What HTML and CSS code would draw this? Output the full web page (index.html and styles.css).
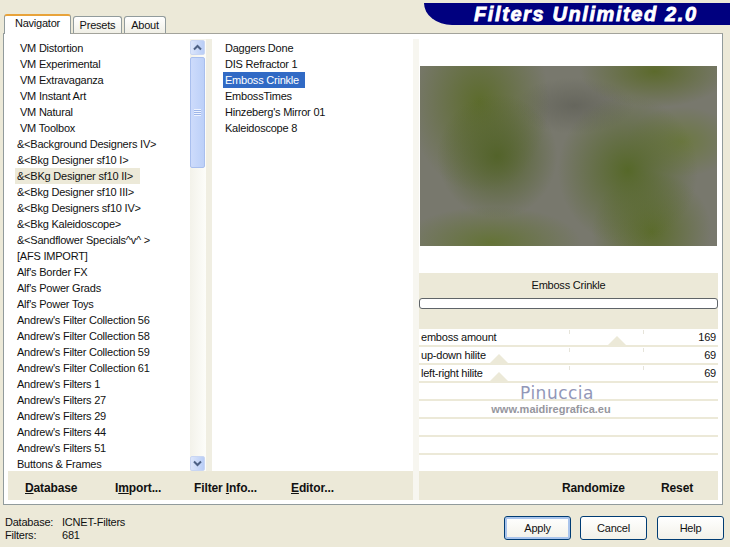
FILE: index.html
```html
<!DOCTYPE html>
<html>

<head>
    <title>Filters Unlimited 2.0</title>
    <link rel="stylesheet" href="styles.css">
</head>

<body>
    <div class="top">
        <div class="tabs">
            <div class="tab active">Navigator</div>
            <div class="tab">Presets</div>
            <div class="tab">About</div>
        </div>
        <div class="banner">Filters Unlimited 2.0</div>
    </div>

    <div class="panel">
        <div class="left">
            <div class="lists">
                <div class="list cats">
                    <div class="row lead">VM Distortion</div>
                    <div class="row lead">VM Experimental</div>
                    <div class="row lead">VM Extravaganza</div>
                    <div class="row lead">VM Instant Art</div>
                    <div class="row lead">VM Natural</div>
                    <div class="row lead">VM Toolbox</div>
                    <div class="row">&amp;&lt;Background Designers IV&gt;</div>
                    <div class="row">&amp;&lt;Bkg Designer sf10 I&gt;</div>
                    <div class="row"><span class="current">&amp;&lt;BKg Designer sf10 II&gt;</span></div>
                    <div class="row">&amp;&lt;Bkg Designer sf10 III&gt;</div>
                    <div class="row">&amp;&lt;Bkg Designers sf10 IV&gt;</div>
                    <div class="row">&amp;&lt;Bkg Kaleidoscope&gt;</div>
                    <div class="row">&amp;&lt;Sandflower Specials^v^ &gt;</div>
                    <div class="row">[AFS IMPORT]</div>
                    <div class="row">Alf's Border FX</div>
                    <div class="row">Alf's Power Grads</div>
                    <div class="row">Alf's Power Toys</div>
                    <div class="row">Andrew's Filter Collection 56</div>
                    <div class="row">Andrew's Filter Collection 58</div>
                    <div class="row">Andrew's Filter Collection 59</div>
                    <div class="row">Andrew's Filter Collection 61</div>
                    <div class="row">Andrew's Filters 1</div>
                    <div class="row">Andrew's Filters 27</div>
                    <div class="row">Andrew's Filters 29</div>
                    <div class="row">Andrew's Filters 44</div>
                    <div class="row">Andrew's Filters 51</div>
                    <div class="row">Buttons &amp; Frames</div>
                </div>
                <div class="scrollbar">
                    <div class="arrow">
                        <svg width="9" height="7" viewBox="0 0 9 7"><path d="M1 5.5 L4.5 2 L8 5.5" fill="none" stroke="#4d6185" stroke-width="2"/></svg>
                    </div>
                    <div class="thumb"><div class="grip"></div></div>
                    <div class="track"></div>
                    <div class="arrow">
                        <svg width="9" height="7" viewBox="0 0 9 7"><path d="M1 1.5 L4.5 5 L8 1.5" fill="none" stroke="#4d6185" stroke-width="2"/></svg>
                    </div>
                </div>
                <div class="gutter"></div>
                <div class="list filters">
                    <div class="row">Daggers Done</div>
                    <div class="row">DIS Refractor 1</div>
                    <div class="row"><span class="selected">Emboss Crinkle</span></div>
                    <div class="row">EmbossTimes</div>
                    <div class="row">Hinzeberg's Mirror 01</div>
                    <div class="row">Kaleidoscope 8</div>
                </div>
            </div>
            <div class="bar">
                <span class="cmd w-database"><u>D</u>atabase</span>
                <span class="cmd w-import">I<u>m</u>port...</span>
                <span class="cmd w-info">Filter <u>I</u>nfo...</span>
                <span class="cmd"><u>E</u>ditor...</span>
            </div>
        </div>

        <div class="right">
            <div class="preview"><div class="picture"></div></div>
            <div class="title-band">
                <div class="filter-name">Emboss Crinkle</div>
                <div class="progress"></div>
            </div>
            <div class="sliders">
                <div class="slider">
                    <span class="tick t1"></span><span class="tick t2"></span>
                    <span class="knob" style="left: 189px"></span>
                    <span class="name">emboss amount</span><span class="value">169</span>
                </div>
                <div class="slider">
                    <span class="tick t1"></span><span class="tick t2"></span>
                    <span class="knob" style="left: 71px"></span>
                    <span class="name">up-down hilite</span><span class="value">69</span>
                </div>
                <div class="slider">
                    <span class="tick t1"></span><span class="tick t2"></span>
                    <span class="knob" style="left: 71px"></span>
                    <span class="name">left-right hilite</span><span class="value">69</span>
                </div>
                <div class="slider"></div>
                <div class="slider"></div>
                <div class="slider"></div>
                <div class="slider"></div>
                <div class="slider last"></div>
                <div class="mark">
                    <div class="mark-name">Pinuccia</div>
                    <div class="mark-url">www.maidiregrafica.eu</div>
                </div>
            </div>
            <div class="bar bar-right">
                <span class="cmd w-random">Randomize</span>
                <span class="cmd">Reset</span>
            </div>
        </div>
    </div>

    <div class="bottom">
        <div class="info">
            <div class="info-row"><span class="info-key">Database:</span>ICNET-Filters</div>
            <div class="info-row"><span class="info-key">Filters:</span>681</div>
        </div>
        <div class="buttons">
            <div class="btn default">Apply</div>
            <div class="btn">Cancel</div>
            <div class="btn">Help</div>
        </div>
    </div>
</body>

</html>
```

FILE: styles.css
```css
html, body {
    margin: 0;
    padding: 0;
}

body {
    width: 730px;
    height: 547px;
    overflow: hidden;
    background-color: #ece9d8;
    font-family: "Liberation Sans", Arial, sans-serif;
    font-size: 11px;
    letter-spacing: -0.22px;
    color: #111;
}

.top {
    display: flex;
    justify-content: space-between;
    height: 33px;
}

.tabs {
    display: flex;
    align-items: flex-end;
    padding-left: 4px;
    position: relative;
    z-index: 1;
}

.tab {
    width: 47px;
    height: 16px;
    line-height: 17px;
    text-align: center;
    margin-left: 2px;
    border: 1px solid #919b9c;
    border-bottom: none;
    border-radius: 3px 3px 0 0;
    background: linear-gradient(#fff, #f0efe6);
}

.tab:last-child {
    width: 40px;
}

.tab.active {
    width: 65px;
    height: 18px;
    line-height: 15px;
    margin-left: 0;
    margin-bottom: -1px;
    border-top: 2px solid #e8a33a;
    background: #fff;
}

.banner {
    width: 306px;
    height: 22px;
    margin-top: 3px;
    padding-left: 50px;
    box-sizing: border-box;
    border-bottom-left-radius: 28px 22px;
    background-color: #00007f;
    color: #fff;
    font-size: 20px;
    font-weight: bold;
    font-style: italic;
    line-height: 23px;
    letter-spacing: 1.6px;
    -webkit-text-stroke: 0.8px #fff;
    white-space: nowrap;
}

.panel {
    display: flex;
    box-sizing: border-box;
    width: 720px;
    height: 472px;
    margin-left: 3px;
    padding: 5px 4px 4px 4px;
    background-color: #fff;
    border: 1px solid #919b9c;
    border-top-color: #a3a39b;
}

.left {
    width: 411px;
    box-sizing: border-box;
    border-right: 6px solid #f7f6f0;
    display: flex;
    flex-direction: column;
    background-color: #f5f4ec;
}

.lists {
    display: flex;
    height: 432px;
}

.list {
    background-color: #fff;
    overflow: hidden;
    padding-top: 1px;
    box-sizing: border-box;
}

.cats {
    width: 182px;
    padding-left: 9px;
}

.filters {
    width: 201px;
    padding-left: 13px;
}

.row {
    height: 16px;
    line-height: 16px;
    white-space: nowrap;
}

.lead {
    padding-left: 3px;
}

.current {
    display: inline-block;
    margin-left: -2px;
    padding: 0 7px 0 2px;
    background-color: #ece9d8;
}

.selected {
    display: inline-block;
    margin-left: -2px;
    padding: 0 6px 0 2px;
    background-color: #316ac5;
    color: #fff;
}

.scrollbar {
    width: 16px;
    height: 431px;
    margin-top: 1px;
    display: flex;
    flex-direction: column;
    background: linear-gradient(to right, #f3f2ea, #fdfdfa);
}

.arrow {
    width: 15px;
    height: 15px;
    display: flex;
    align-items: center;
    justify-content: center;
    background: linear-gradient(to right, #dce6fb, #b9cdf6);
    border: 1px solid #c9d6f3;
    box-sizing: border-box;
    border-radius: 2px;
}

.thumb {
    width: 15px;
    height: 111px;
    margin-top: 2px;
    display: flex;
    align-items: center;
    justify-content: center;
    box-sizing: border-box;
    border: 1px solid #a9bfee;
    border-radius: 2px;
    background: linear-gradient(to right, #cddbfb, #bcd0f8);
}

.grip {
    width: 7px;
    height: 7px;
    background: repeating-linear-gradient(#eef3fe 0, #eef3fe 1px, #9db5e8 1px, #9db5e8 2px);
}

.track {
    flex: 1;
}

.gutter {
    width: 6px;
    background-color: #f0eee2;
}

.bar {
    flex: 1;
    display: flex;
    align-items: center;
    padding: 5px 0 0 17px;
    background-color: #ece9d8;
}

.cmd {
    font-size: 12px;
    font-weight: bold;
    letter-spacing: -0.12px;
}

.w-database {
    width: 90px;
}

.w-import {
    width: 79px;
}

.w-info {
    width: 97px;
}

.right {
    width: 299px;
    display: flex;
    flex-direction: column;
}

.preview {
    height: 234px;
    padding: 27px 0 0 1px;
    box-sizing: border-box;
}

.picture {
    width: 297px;
    height: 180px;
    background-color: #78786d;
    background-image:
        radial-gradient(ellipse 60px 62px at 26% 50%, #53632a 0%, rgba(83, 99, 42, 0) 100%),
        radial-gradient(ellipse 70px 90px at 20% 20%, #5d6c2d 0%, rgba(93, 108, 45, 0) 100%),
        radial-gradient(ellipse 75px 36px at 79% 3%, #5c6a2c 0%, rgba(92, 106, 44, 0) 100%),
        radial-gradient(ellipse 70px 75px at 70% 58%, #566829 0%, rgba(86, 104, 41, 0) 100%),
        radial-gradient(ellipse 60px 60px at 78% 92%, #5c6c2d 0%, rgba(92, 108, 45, 0) 100%),
        radial-gradient(ellipse 90px 36px at 24% 98%, #647337 0%, rgba(100, 115, 55, 0) 100%),
        radial-gradient(ellipse 55px 35px at 88% 42%, #6c7842 0%, rgba(108, 120, 66, 0) 100%),
        radial-gradient(ellipse 60px 28px at 52% 22%, #66665d 0%, rgba(102, 102, 93, 0) 100%);
}

.title-band {
    height: 56px;
    padding-top: 4px;
    box-sizing: border-box;
    background-color: #ece9d8;
}

.filter-name {
    height: 16px;
    line-height: 16px;
    text-align: center;
}

.progress {
    height: 11px;
    margin-top: 5px;
    box-sizing: border-box;
    background-color: #fff;
    border: 1px solid #5f6468;
    border-radius: 3px;
}

.sliders {
    position: relative;
    height: 142px;
    background-color: #ece9d8;
}

.slider {
    position: relative;
    display: flex;
    justify-content: space-between;
    height: 16px;
    line-height: 16px;
    margin-bottom: 2px;
    padding: 0 2px 0 2px;
    background-color: #fff;
}

.slider.last {
    margin-bottom: 0;
}

.name, .value {
    position: relative;
}

.tick {
    position: absolute;
    top: 1px;
    width: 1px;
    height: 4px;
    background-color: #e6e4da;
}

.t1 {
    left: 150px;
}

.t2 {
    left: 224px;
}

.knob {
    position: absolute;
    bottom: 0;
    width: 0;
    height: 0;
    border-left: 9px solid transparent;
    border-right: 9px solid transparent;
    border-bottom: 9px solid #ece9d8;
}

.mark {
    position: absolute;
    left: 70px;
    top: 54px;
    width: 136px;
    text-align: center;
}

.mark-name {
    font-family: "DejaVu Sans", sans-serif;
    font-size: 17px;
    line-height: 20px;
    letter-spacing: 0.5px;
    color: #9297b8;
}

.mark-url {
    margin-left: -12px;
    font-size: 11px;
    line-height: 13px;
    font-weight: bold;
    letter-spacing: 0;
    color: #96969e;
    white-space: nowrap;
}

.bar-right {
    padding-left: 143px;
}

.w-random {
    width: 99px;
}

.bottom {
    display: flex;
    justify-content: space-between;
    height: 42px;
    padding: 0 6px 0 5px;
}

.info {
    padding-top: 11px;
}

.info-row {
    height: 13px;
    line-height: 13px;
}

.info-key {
    display: inline-block;
    width: 57px;
}

.buttons {
    display: flex;
    gap: 9px;
    padding-top: 11px;
}

.btn {
    width: 67px;
    height: 24px;
    line-height: 22px;
    text-align: center;
    box-sizing: border-box;
    border: 1px solid #003c74;
    border-radius: 3px;
    background: linear-gradient(#fff, #f2f1e9);
}

.btn:last-child {
    margin-left: 1px;
}

.btn.default {
    box-shadow: inset 0 0 0 2px #a9c4ec;
}
```
